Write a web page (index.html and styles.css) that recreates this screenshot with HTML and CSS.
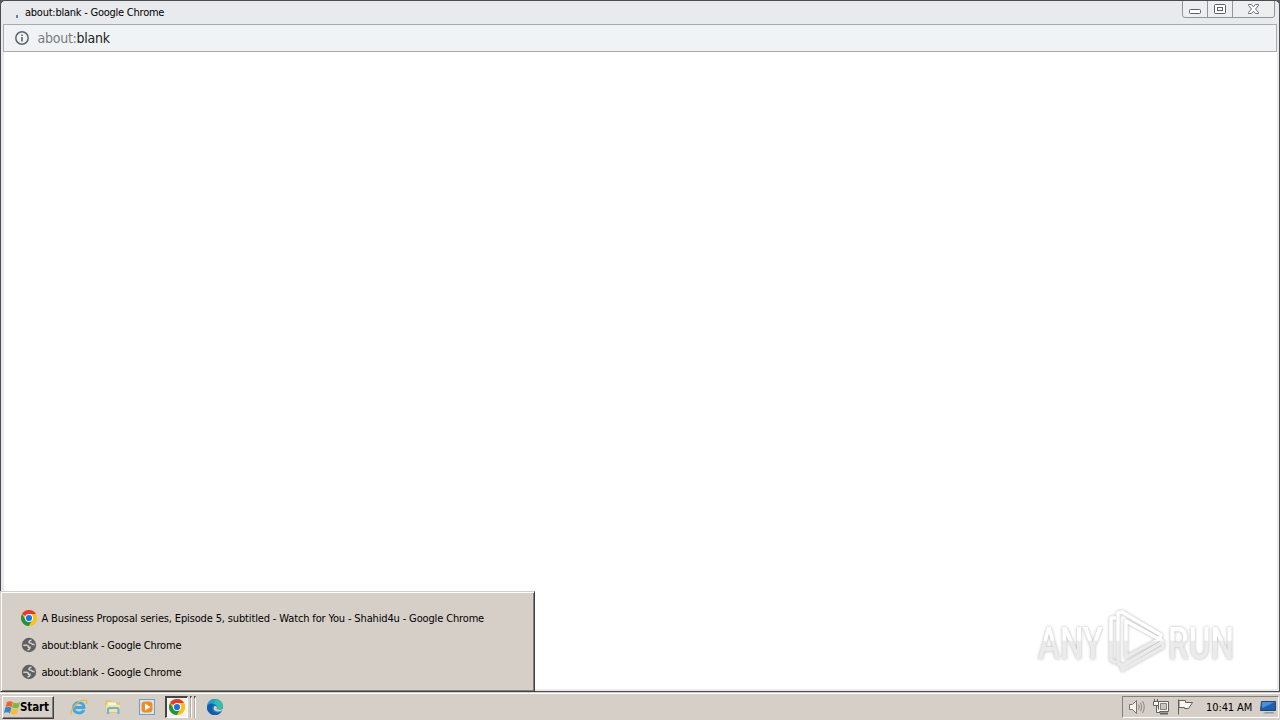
FILE: index.html
```html
<!DOCTYPE html>
<html lang="en">
<head>
<meta charset="utf-8">
<title>about:blank - Google Chrome</title>
<link rel="stylesheet" href="styles.css">
</head>
<body>
<svg class="defs" width="0" height="0">
  <defs>
    <symbol id="chrome" viewBox="0 0 16 16">
      <circle cx="8" cy="8" r="8" fill="#fbc116"/>
      <path d="M8 8 1.07 4A8 8 0 0 1 14.93 4Z" fill="#e33b2e"/>
      <path d="M1.07 4A8 8 0 0 0 8 16L11.4 10 8 8 4.6 10Z" fill="#229342"/>
      <path d="M8 4H14.93A8 8 0 0 1 8 16L11.4 10Z" fill="#fbc116"/>
      <circle cx="8" cy="8" r="4" fill="#fff"/>
      <circle cx="8" cy="8" r="3.1" fill="#1a73e8"/>
    </symbol>
    <symbol id="globe" viewBox="0 0 16 16">
      <circle cx="8" cy="8" r="7.2" fill="#5f6063"/>
      <path d="M2.300 8.200H5.500Q7.500 8.400 7.500 10.200H9Q9 12.500 6.500 13" fill="none" stroke="#d6cfc8" stroke-width="1.600"/>
      <path d="M10.500 3.200Q8.200 3.200 8 5.200 8 6.200 10 6.200 11 7.800 13.600 7.600" fill="none" stroke="#d6cfc8" stroke-width="1.600"/>
    </symbol>
  </defs>
</svg>
<div class="desktop">
  <main class="window">
    <header class="titlebar">
      <i class="spinner"></i>
      <h1 class="caption">about:blank - Google Chrome</h1>
      <svg class="controls" width="94" height="18" viewBox="0 0 94 18">
        <path d="M.5 0V14Q.5 16.500 3 16.500H90Q92.500 16.500 92.500 14V0" fill="#eceef0" stroke="#92969b"/>
        <path d="M25.500 0V16M50.500 0V16" stroke="#92969b"/>
        <rect x="7.500" y="8.500" width="11" height="4" rx="1" fill="#fff" stroke="#5c6068"/>
        <rect x="32.500" y="3.500" width="11" height="9" rx="1" fill="#fff" stroke="#5c6068"/>
        <rect x="35.500" y="6.500" width="5" height="3" fill="#fff" stroke="#5c6068"/>
        <path d="M66.500 3.500H69.500L71.500 5.800 73.500 3.500H76.500V4.500L73.500 8 76.500 11.500V12.500H73.500L71.500 10.200 69.500 12.500H66.500V11.500L69.500 8 66.500 4.500Z" fill="#fff" stroke="#6b6f76"/>
      </svg>
    </header>
    <div class="address">
      <svg width="14" height="14" viewBox="0 0 14 14"><circle cx="7" cy="7" r="6.200" fill="none" stroke="#5f6368" stroke-width="1.500"/><path d="M7 6V10.500M7 3.400V5" stroke="#5f6368" stroke-width="1.600"/></svg>
      <span class="url"><span class="scheme">about:</span>blank</span>
    </div>
    <section class="page"></section>
  </main>
  <footer class="taskbar">
    <button class="start">
      <svg width="17" height="16" viewBox="0 0 17 16">
        <path d="M3 2Q6 .2 8.800 2.200L7.500 7.200Q5 5.500 1.600 7Z" fill="#ea642b"/>
        <path d="M9.300 2.500Q12.500 4.200 16 2.300L14.500 7.700Q11.500 9 8 7.500Z" fill="#7fb83d"/>
        <path d="M1.300 7.600Q4.500 6 7.400 7.900L5.900 13.200Q3.400 11.500 0 13Z" fill="#3c83cb"/>
        <path d="M7.900 8.200Q11 10 14.300 8.400L12.800 13.800Q9.800 15.300 6.500 13.500Z" fill="#f5bd32"/>
      </svg>
      <span>Start</span>
    </button>
    <nav class="launch">
      <svg class="ie" width="18" height="18" viewBox="0 0 18 18">
        <path d="M5 9.500H14C14 3.200 3.800 2.500 3.500 9.600 3.500 16 12.300 16.500 13.800 11.900" fill="none" stroke="#42a7df" stroke-width="2.800"/>
        <path d="M1.500 16.500C-1 14 6 3 14.500 1.800 17.500 1.600 17 4 16 6" fill="none" stroke="#e5b747" stroke-width="1.300"/>
      </svg>
      <svg class="folder" width="18" height="17" viewBox="0 0 18 17">
        <path d="M2 2H7L8.500 4H15.500V13H2Z" fill="#efd376" stroke="#d9b64f" stroke-width=".7"/>
        <path d="M4 3.500H12V7H4Z" fill="#fff8d8"/><path d="M2 6H16V13H2Z" fill="#f6e3a0"/>
        <path d="M4 15V10.500Q4 9 5.500 9H13Q14.500 9 14.500 10.500V15" fill="none" stroke="#69b6dc" stroke-width="2.200"/>
      </svg>
      <svg class="media" width="16" height="16" viewBox="0 0 16 16">
        <rect x=".5" y=".5" width="15" height="15" fill="#d8e5ee" stroke="#6e9fc6"/>
        <rect x="2.500" y="2.500" width="11" height="11" rx="3.500" fill="#f18b20"/><path d="M6 4.500 11.500 8 6 11.500Z" fill="#fff"/>
      </svg>
      <div class="task-group">
        <div class="task-active"><svg width="16" height="16"><use href="#chrome"/></svg></div>
        <i></i><i></i>
      </div>
      <svg class="edge" width="18" height="18" viewBox="0 0 18 18">
        <circle cx="9" cy="9" r="8" fill="#1677bd"/>
        <path d="M1.200 8C2 -1 16.500-1 17 7.800 17 12 12.500 12.400 10.600 11 12.400 8.500 10 5.800 7 6 4 6 2 7 1.200 8Z" fill="#35bda8"/>
        <path d="M1.200 8C2 2 7 .5 10 1.200 8 3 9 5 7 6 4 6 2 7 1.200 8Z" fill="#239fd0"/>
        <path d="M1 9C2 5.500 5.500 4.800 8.500 6 5.500 7 5.500 11 7 13 9 16 13 15.300 15.400 13.400 13 17.500 7 18 4 15.500 1.500 13.500.8 11.500 1 9Z" fill="#125ca8"/>
        <path d="M10.600 11C12 8.500 9 6.500 7.600 9.500 7 13 12 15 15.800 12.400L17.500 13V10C16 12 12.500 12.400 10.600 11Z" fill="#d6cfc8"/>
      </svg>
    </nav>
    <div class="tray">
      <svg width="17" height="16" viewBox="0 0 17 16"><path d="M.5 5.500H3.500L7.500 1.500V14.500L3.500 10.500H.5Z" fill="#f6f4f1" stroke="#77736f"/><path d="M9.500 5.500Q11 8 9.500 10.500M11.500 3.800Q14 8 11.500 12.200M13.500 2Q17 8 13.500 14" fill="none" stroke="#8b8783"/></svg>
      <svg width="17" height="16" viewBox="0 0 17 16"><path d="M5.500 2.500H15.500V12.500H5.500Z" fill="#f8f6f3" stroke="#64615e"/><path d="M7.500 4.500H13.500V10.500H7.500Z" fill="#cbc6c1" stroke="#85817d"/><path d="M7 14.500H15" stroke="#64615e" stroke-width="2"/><path d="M.5 2.500H5.500V6.500H.5ZM1.500 0V2M4.500 0V2M3.500 7V13.500H7" fill="#f8f6f3" stroke="#64615e"/></svg>
      <svg width="17" height="16" viewBox="0 0 17 16"><path d="M1.500 15.500V.5" stroke="#64615e"/><path d="M2 1.500H8.500V3.500H15.500L11.500 9.500H7.500V8.500H2Z" fill="#f8f6f3" stroke="#64615e"/></svg>
      <time class="clock">10:41 AM</time>
      <svg class="show-desktop" width="16" height="14" viewBox="0 0 16 14"><path d="M1.500 1.500H15.500V10.500H.5Z" fill="#1d5fb5" stroke="#24446d"/><path d="M2 2H15L2 8Z" fill="#4d8fd4"/><path d="M5 12H13L15 13.500H3Z" fill="#8f9aa5"/></svg>
    </div>
  </footer>
  <aside class="switcher">
    <div class="entry"><svg width="16" height="16"><use href="#chrome"/></svg><span class="long">A Business Proposal series, Episode 5, subtitled - Watch for You - Shahid4u - Google Chrome</span></div>
    <div class="entry"><svg width="16" height="16"><use href="#globe"/></svg><span>about:blank - Google Chrome</span></div>
    <div class="entry"><svg width="16" height="16"><use href="#globe"/></svg><span>about:blank - Google Chrome</span></div>
  </aside>
  <svg class="watermark" width="240" height="90" viewBox="0 0 240 90">
    <defs><linearGradient id="fade" gradientUnits="userSpaceOnUse" x1="0" y1="0" x2="0" y2="80"><stop offset=".5" stop-color="#fff"/><stop offset=".52" stop-color="#ebebeb"/></linearGradient></defs>
    <text x="13" y="59" textLength="65" lengthAdjust="spacingAndGlyphs" class="brand">ANY</text>
    <text x="143" y="59" textLength="66" lengthAdjust="spacingAndGlyphs" class="brand">RUN</text>
    <path d="M91 18H86V60L91 63M97 12 136 35 134 39 101 21V57L135 39 138 42 97 66 93 63V13ZM97 66V70L138 47V42" fill="none" stroke="url(#fade)" stroke-width="3.500" stroke-linejoin="round"/>
  </svg>
</div>
</body>
</html>
```
FILE: styles.css
```css
* { box-sizing: border-box; }
body { margin: 0; overflow: hidden; }
.defs { position: absolute; }
svg { display: block; flex: none; }
.desktop {
  position: relative; width: 1280px; height: 720px;
  display: flex; flex-direction: column; background: #55585c;
  font: 11px/14px "DejaVu Sans Condensed", "DejaVu Sans", sans-serif;
  font-stretch: condensed; color: #000;
}
.window {
  height: 692px; display: flex; flex-direction: column;
  border: 1px solid #4a4c50; border-radius: 5px 5px 0 0;
  background: #e8eaed; padding: 0 2px 2px;
}
.titlebar { height: 23px; display: flex; align-items: flex-start; }
.spinner { width: 2px; height: 3px; margin: 14px 7px 0 13px; background: #5380d4; }
.caption { margin: 5px 0 0; font-size: 11px; font-weight: 400; line-height: 14px; letter-spacing: -.24px; flex: 1; }
.controls { margin-right: 1px; }
.address {
  height: 28px; display: flex; align-items: center; gap: 8.5px; padding-left: 11px;
  border: 1px solid #a9abad; background: #f0f3f6;
}
.url { font: 14px/18px "DejaVu Sans Condensed", "DejaVu Sans", sans-serif; font-stretch: condensed; letter-spacing: -.25px; color: #202124; }
.scheme { color: #777b80; }
.page { flex: 1; background: #fff; margin-left: 1px; }
.taskbar {
  height: 28px; display: flex; align-items: flex-start; padding-top: 3px;
  background: #d6cfc8; border-top: 1px solid #d6cfc8; box-shadow: inset 0 1px #fff;
}
.start {
  width: 52px; height: 23px; margin-left: 2px; padding: 0 0 0 1px; display: flex; align-items: center;
  border: 1px solid; border-color: #fff #404040 #404040 #fff; box-shadow: inset -1px -1px #85807a;
  background: #d6cfc8; font: bold 11.5px/14px "DejaVu Sans Condensed", sans-serif; font-stretch: condensed; letter-spacing: -.1px; color: #000;
}
.start span { margin: -1px 0 0 -1px; }
.launch { display: flex; align-items: center; height: 22px; padding-left: 16px; }
.folder { margin-left: 16px; }
.media { margin-left: 17px; }
.task-group { height: 22px; display: flex; gap: 2px; margin-left: 10px; }
.task-active { width: 23px; height: 22px; padding: 1px 2px; border: 2px solid; border-color: #444 #fff #fff #444; background: #f5f3f1; border-right-width: 1px; border-bottom-width: 1px; }
.task-group i { width: 2px; border-top: 2px solid #444; border-right: 1px solid #fff; background: #b5afa8; }
.edge { margin-left: 10px; }
.tray {
  width: 157px; height: 22px; margin-left: auto; margin-right: 1px; padding: 0 1px 0 6px;
  display: flex; align-items: center; gap: 7px;
  border: 1px solid; border-color: #85807a #fff #fff #85807a;
}
.clock { width: 47px; margin-left: 5px; padding-top: 1px; letter-spacing: -.1px; white-space: nowrap; }
.show-desktop { margin-left: 0; }
.switcher {
  position: absolute; left: 0; top: 591px; width: 535px; height: 101px; padding: 12px 0 0 20px;
  background: #d6cfc8; border: 1px solid; border-color: #d6cfc8 #404040 #404040 #d6cfc8;
  box-shadow: inset 1px 1px #fff, inset -1px -1px #85807a;
}
.entry { display: flex; height: 27px; align-items: center; gap: 4.5px; letter-spacing: -.22px; white-space: nowrap; }
.entry span { padding-top: 2px; }
.long { letter-spacing: -.145px; }
.watermark { position: absolute; left: 1025px; top: 600px; filter: drop-shadow(0 0 1.5px #b4b4b4); }
.brand { font: 500 44px "Roboto", sans-serif; fill: url(#fade); }
```
